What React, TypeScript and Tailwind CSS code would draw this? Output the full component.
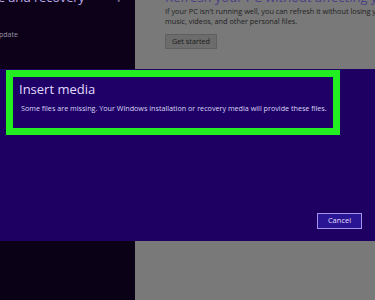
import React from 'react';

export default function App() {
  return (
    <div className="w-[375px] h-[300px] overflow-hidden flex flex-col select-none" style={{ fontFamily: '"Open Sans", "Noto Sans", sans-serif' }}>
      {/* top: settings page behind the dialog */}
      <div className="h-[69px] flex">
        <div className="w-[135px] bg-[#0d0119] overflow-hidden">
          <div className="-mt-[12px] flex items-start justify-between pr-[14px]">
            <span className="text-[13px] leading-[18px] tracking-[-0.2px] text-[#b8a8e8] whitespace-nowrap -ml-[2px]">e and recovery</span>
            <span className="text-[9px] leading-[10px] text-[#8a80a8] mt-[6px]">v</span>
          </div>
          <div className="mt-[24px] text-[7px] text-[#9a94a8] -ml-[1px]">pdate</div>
        </div>
        <div className="flex-1 bg-[#797979] pl-[30px] overflow-hidden">
          <div className="-mt-[11px] text-[13px] leading-[16px] text-[#4b3f86] whitespace-nowrap">Refresh your PC without affecting your files</div>
          <p className="mt-[1px] text-[7.3px] leading-[10px] text-[#1e1e1e] whitespace-nowrap">
            If your PC isn't running well, you can refresh it without losing your
            <br />
            music, videos, and other personal files.
          </p>
          <button className="mt-[2px] h-[15px] w-[52px] bg-[#6c6c6c] border border-[#5f5f5f] text-[7.3px] leading-none text-[#1a1a1a]">Get started</button>
        </div>
      </div>

      {/* dialog band */}
      <div className="h-[172px] bg-[#1d0062] flex flex-col pt-[1px]">
        <div className="ml-[6px] w-[334px] h-[65px] border-[7px] border-[#22ee22] bg-[#1e0066] pl-[6px] pt-[4px]">
          <div className="text-[13px] leading-[16px] text-[#e2dcff]">Insert media</div>
          <div className="mt-[6px] ml-[2px] text-[7.2px] text-[#dcd6f6] whitespace-nowrap">
            Some files are missing. Your Windows installation or recovery media will provide these files.
          </div>
        </div>
        <div className="mt-auto mb-[12px] mr-[13px] self-end">
          <button className="w-[45px] h-[16px] border border-[#a494e6] bg-[#2a1694] text-[7.5px] leading-none text-[#e4ddff]">Cancel</button>
        </div>
      </div>

      {/* bottom */}
      <div className="flex-1 flex">
        <div className="w-[135px] bg-[#0b0117]" />
        <div className="flex-1 bg-[#797979]" />
      </div>
    </div>
  );
}
